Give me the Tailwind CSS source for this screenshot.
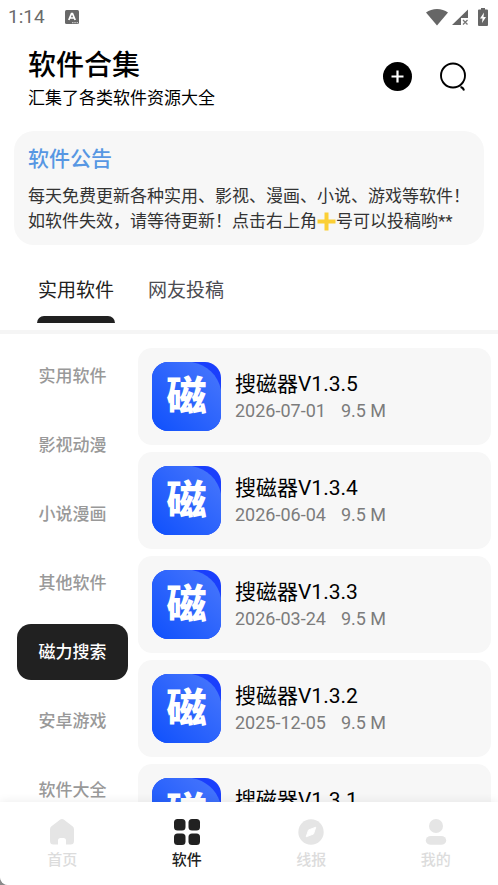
<!DOCTYPE html>
<html lang="zh-CN">
<head>
<meta charset="utf-8">
<meta name="viewport" content="width=device-width, initial-scale=1">
<title>软件合集</title>
<script src="https://cdn.jsdelivr.net/npm/@tailwindcss/browser@4"></script>
</head>
<body class="bg-[#8a8a8a] font-['Roboto','Noto_Sans_CJK_SC',sans-serif] text-black">
<svg class="absolute size-0" aria-hidden="true">
  <defs>
    <linearGradient id="tile" x1="0" y1="1" x2="1" y2="0">
      <stop offset="0" stop-color="#0f50fc"/>
      <stop offset="1" stop-color="#4a78fc"/>
    </linearGradient>
    <symbol id="app" viewBox="0 0 69 69">
      <rect width="69" height="69" fill="#1a3ffc"/>
      <path d="M0 0H40C55 3 66 13 69 28V69H0Z" fill="url(#tile)"/>
    </symbol>
  </defs>
</svg>
<div class="flex h-dvh flex-col overflow-hidden rounded-bl-lg bg-white">
  <div class="flex h-8 shrink-0 items-center pt-[2px] pr-[10px] pl-2 text-[#6b6b6b]">
    <span class="text-[19px] leading-6">1:14</span>
    <svg class="ml-[20px] size-[14px]" viewBox="0 0 14 14" aria-hidden="true">
      <rect width="14" height="14" rx="1.5" fill="#686868"/>
      <path d="M3.800 10 6.500 3.600h1L10.200 10M5 8h4" fill="none" stroke="#fff" stroke-width="1.700"/>
      <path d="M7 12.700h6" stroke="#ddd" stroke-width="1" stroke-dasharray="1.500 .8"/>
    </svg>
    <svg class="ml-auto h-[18px] w-[22px]" viewBox="0 0 22 18" aria-hidden="true"><path d="M0 4.500C6-.3 16-.3 22 4.500L11 17.500Z" fill="#666"/></svg>
    <svg class="ml-1 h-[18px] w-[17px]" viewBox="0 0 17 18" aria-hidden="true">
      <path d="M16 1.500V10H9V17H0Z" fill="#666"/>
      <path d="M11 12 15.500 16.500M15.500 12 11 16.500" stroke="#777" stroke-width="1.300"/>
    </svg>
    <svg class="ml-[9px] h-[18px] w-[10px]" viewBox="0 0 10 18" aria-hidden="true">
      <path d="M3 0H7V1.500H9Q10 1.500 10 2.500V17Q10 18 9 18H1Q0 18 0 17V2.500Q0 1.500 1 1.500H3Z" fill="#666"/>
      <path d="M6 4.500 2 10.500H4.500L4 15 8 9H5.500Z" fill="#fff"/>
    </svg>
  </div>

  <header class="flex shrink-0 items-center justify-between pt-4 pr-[30px] pl-7">
    <div>
      <h1 class="text-[28px] leading-9 font-medium">软件合集</h1>
      <p class="text-[17px] leading-7">汇集了各类软件资源大全</p>
    </div>
    <div class="flex items-center gap-[27px] pb-2">
      <button type="button" aria-label="投稿">
        <svg class="size-[29px]" viewBox="0 0 29 29"><circle cx="14.500" cy="14.500" r="14.500"/><path d="M14.500 8.500v12M8.500 14.500h12" stroke="#fff" stroke-width="2.200"/></svg>
      </button>
      <button type="button" aria-label="搜索">
        <svg class="size-[29px]" viewBox="0 0 29 29" fill="none" stroke="#000" stroke-width="1.900"><circle cx="14" cy="13.500" r="12"/><path d="M21.500 25Q24.200 25.500 25 28.500"/></svg>
      </button>
    </div>
  </header>

  <section class="mx-[14px] mt-[19px] shrink-0 rounded-[20px] bg-[#f7f7f7] px-[14px] pt-[14px] pb-[11px]">
    <h2 class="text-[21px] leading-7 font-medium text-[#5797e3]">软件公告</h2>
    <p class="mt-[11px] text-[17px] leading-[25px] whitespace-nowrap text-[#333]">每天免费更新各种实用、影视、漫画、小说、游戏等软件！<br>如软件失效，请等待更新！点击右上角<svg class="inline size-[19px] align-[-4px]" viewBox="0 0 19 19" role="img" aria-label="加号"><path d="M7.500 .5h4v7H18.500v4h-7V18.500h-4v-7H.5v-4h7Z" fill="#fbcf35"/></svg>号可以投稿哟**</p>
  </section>

  <nav class="mt-[26px] flex shrink-0 gap-[33px] border-b-4 border-[#f5f5f5] pb-[7px] pl-[37px] text-[19px] leading-10" aria-label="来源">
    <a href="#apps" class="flex flex-col text-center text-[#212121]"><span class="px-px">实用软件</span><span class="mt-[5px] h-[7px] rounded-t-[7px] bg-[#212121]"></span></a>
    <a href="#posts" class="text-[#4c4c52]">网友投稿</a>
  </nav>

  <main class="flex min-h-0 flex-1 gap-[10px] overflow-hidden pt-[14px] pr-[7px] pl-[17px]">
    <div class="flex w-[111px] shrink-0 flex-col gap-[13px] text-[17px] font-medium text-[#999]">
      <button type="button" class="h-14 shrink-0 pt-[2px]">实用软件</button>
      <button type="button" class="h-14 shrink-0 pt-[2px]">影视动漫</button>
      <button type="button" class="h-14 shrink-0 pt-[2px]">小说漫画</button>
      <button type="button" class="h-14 shrink-0 pt-[2px]">其他软件</button>
      <button type="button" class="h-14 shrink-0 rounded-[14px] bg-[#212121] pt-[2px] text-white">磁力搜索</button>
      <button type="button" class="h-14 shrink-0 pt-[2px]">安卓游戏</button>
      <button type="button" class="h-14 shrink-0 pt-[2px]">软件大全</button>
    </div>
    <ul class="flex min-w-0 flex-1 flex-col gap-[7px]">
      <li class="flex shrink-0 gap-[14px] rounded-[14px] bg-[#f7f7f7] p-[14px]">
        <div class="grid size-[69px] shrink-0 place-items-center overflow-hidden rounded-[16px] *:[grid-area:1/1]"><svg class="size-full"><use href="#app"/></svg><span class="text-[40px] leading-[69px] font-black text-white">磁</span></div>
        <div class="pt-2"><h3 class="text-[21px] leading-7">搜磁器V1.3.5</h3><p class="flex gap-[15px] text-[18px] leading-[26px] text-[#7c7c7c]"><span>2026-07-01</span><span>9.5 M</span></p></div>
      </li>
      <li class="flex shrink-0 gap-[14px] rounded-[14px] bg-[#f7f7f7] p-[14px]">
        <div class="grid size-[69px] shrink-0 place-items-center overflow-hidden rounded-[16px] *:[grid-area:1/1]"><svg class="size-full"><use href="#app"/></svg><span class="text-[40px] leading-[69px] font-black text-white">磁</span></div>
        <div class="pt-2"><h3 class="text-[21px] leading-7">搜磁器V1.3.4</h3><p class="flex gap-[15px] text-[18px] leading-[26px] text-[#7c7c7c]"><span>2026-06-04</span><span>9.5 M</span></p></div>
      </li>
      <li class="flex shrink-0 gap-[14px] rounded-[14px] bg-[#f7f7f7] p-[14px]">
        <div class="grid size-[69px] shrink-0 place-items-center overflow-hidden rounded-[16px] *:[grid-area:1/1]"><svg class="size-full"><use href="#app"/></svg><span class="text-[40px] leading-[69px] font-black text-white">磁</span></div>
        <div class="pt-2"><h3 class="text-[21px] leading-7">搜磁器V1.3.3</h3><p class="flex gap-[15px] text-[18px] leading-[26px] text-[#7c7c7c]"><span>2026-03-24</span><span>9.5 M</span></p></div>
      </li>
      <li class="flex shrink-0 gap-[14px] rounded-[14px] bg-[#f7f7f7] p-[14px]">
        <div class="grid size-[69px] shrink-0 place-items-center overflow-hidden rounded-[16px] *:[grid-area:1/1]"><svg class="size-full"><use href="#app"/></svg><span class="text-[40px] leading-[69px] font-black text-white">磁</span></div>
        <div class="pt-2"><h3 class="text-[21px] leading-7">搜磁器V1.3.2</h3><p class="flex gap-[15px] text-[18px] leading-[26px] text-[#7c7c7c]"><span>2025-12-05</span><span>9.5 M</span></p></div>
      </li>
      <li class="flex shrink-0 gap-[14px] rounded-[14px] bg-[#f7f7f7] p-[14px]">
        <div class="grid size-[69px] shrink-0 place-items-center overflow-hidden rounded-[16px] *:[grid-area:1/1]"><svg class="size-full"><use href="#app"/></svg><span class="text-[40px] leading-[69px] font-black text-white">磁</span></div>
        <div class="pt-2"><h3 class="text-[21px] leading-7">搜磁器V1.3.1</h3></div>
      </li>
    </ul>
  </main>

  <nav class="z-10 grid shrink-0 grid-cols-4 rounded-bl-lg bg-white pt-[15px] pb-3 text-[15px] leading-[26px] font-medium text-[#dcdcdc] shadow-[0_-1px_10px_rgba(0,0,0,0.07)]" aria-label="主导航">
    <a href="#home" class="flex flex-col items-center">
      <svg class="size-[30px]" viewBox="0 0 30 30" fill="#e5e5e5" aria-hidden="true"><path d="M13.300 2.600Q15 1.300 16.700 2.600L25.500 9.300Q27 10.500 27 12.300V24Q27 27.500 23.500 27.500H19V23.500Q19 21 16.500 21H13.500Q11 21 11 23.500V27.500H6.500Q3 27.500 3 24V12.300Q3 10.500 4.500 9.300Z"/></svg>
      <span>首页</span>
    </a>
    <a href="#apps" class="flex flex-col items-center text-[#212121]">
      <svg class="size-[30px]" viewBox="0 0 30 30" fill="#212121" aria-hidden="true"><rect x="2" y="2" width="11.500" height="11.500" rx="3.500"/><rect x="16.500" y="2" width="11.500" height="11.500" rx="3.500"/><rect x="2" y="16.500" width="11.500" height="11.500" rx="3.500"/><rect x="16.500" y="16.500" width="11.500" height="11.500" rx="3.500"/></svg>
      <span>软件</span>
    </a>
    <a href="#news" class="flex flex-col items-center">
      <svg class="size-[30px]" viewBox="0 0 30 30" fill="#e5e5e5" aria-hidden="true"><circle cx="15" cy="15" r="12.700"/><path d="M19.800 10.200 17.500 17 10.200 19.800 12.500 13Z" fill="#fff" stroke="#fff" stroke-linejoin="round"/></svg>
      <span>线报</span>
    </a>
    <a href="#me" class="flex flex-col items-center">
      <svg class="size-[30px]" viewBox="0 0 30 30" fill="#e5e5e5" aria-hidden="true"><circle cx="15" cy="9" r="7"/><rect x="4.800" y="19" width="20.400" height="8.800" rx="5" ry="4.400"/></svg>
      <span>我的</span>
    </a>
  </nav>
</div>
</body>
</html>
